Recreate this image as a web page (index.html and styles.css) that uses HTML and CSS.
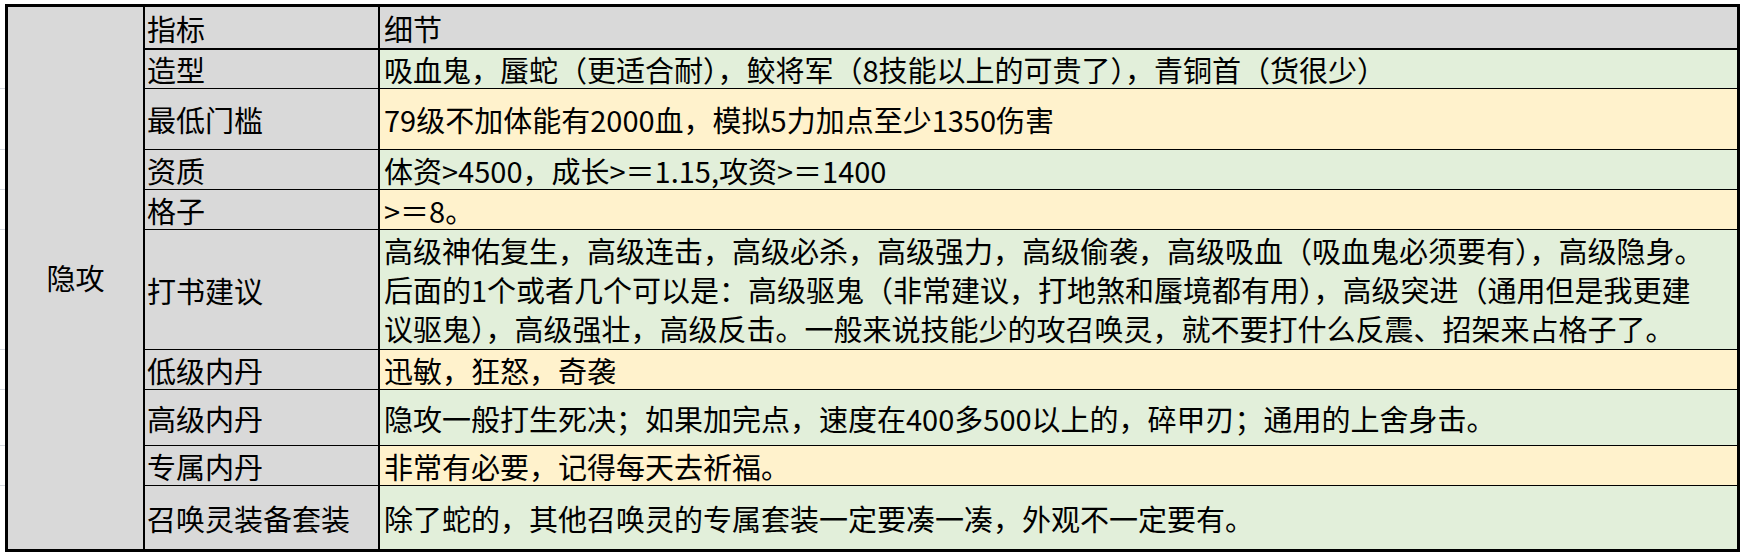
FILE: index.html
```html
<!DOCTYPE html>
<html lang="zh-CN">
<head>
<meta charset="utf-8">
<title>隐攻</title>
<link rel="stylesheet" href="styles.css">
</head>
<body>
<div class="page">
  <div class="gutter">
    <div class="g g1"></div>
    <div class="g g2"></div>
    <div class="g g3"></div>
    <div class="g g3"></div>
    <div class="g g4"></div>
    <div class="g g3"></div>
    <div class="g g5"></div>
    <div class="g g3"></div>
  </div>
  <div class="sheet">
    <div class="cell group">隐攻</div>

    <div class="cell key head">指标</div>
    <div class="cell val head">细节</div>

    <div class="cell key">造型</div>
    <div class="cell val green">吸血鬼，蜃蛇（更适合耐），鲛将军（8技能以上的可贵了），青铜首（货很少）</div>

    <div class="cell key">最低门槛</div>
    <div class="cell val yellow">79级不加体能有2000血，模拟5力加点至少1350伤害</div>

    <div class="cell key">资质</div>
    <div class="cell val green">体资&gt;4500，成长&gt;＝1.15,攻资&gt;＝1400</div>

    <div class="cell key">格子</div>
    <div class="cell val yellow">&gt;＝8。</div>

    <div class="cell key">打书建议</div>
    <div class="cell val green multi">高级神佑复生，高级连击，高级必杀，高级强力，高级偷袭，高级吸血（吸血鬼必须要有），高级隐身。<br>后面的1个或者几个可以是：高级驱鬼（非常建议，打地煞和蜃境都有用），高级突进（通用但是我更建<br>议驱鬼），高级强壮，高级反击。一般来说技能少的攻召唤灵，就不要打什么反震、招架来占格子了。</div>

    <div class="cell key">低级内丹</div>
    <div class="cell val yellow">迅敏，狂怒，奇袭</div>

    <div class="cell key">高级内丹</div>
    <div class="cell val green">隐攻一般打生死决；如果加完点，速度在400多500以上的，碎甲刃；通用的上舍身击。</div>

    <div class="cell key">专属内丹</div>
    <div class="cell val yellow">非常有必要，记得每天去祈福。</div>

    <div class="cell key last">召唤灵装备套装</div>
    <div class="cell val green last">除了蛇的，其他召唤灵的专属套装一定要凑一凑，外观不一定要有。</div>
  </div>
</div>
</body>
</html>
```

FILE: styles.css
```css
* {
  box-sizing: border-box;
}

html, body {
  margin: 0;
  padding: 0;
  background: #ffffff;
}

body {
  width: 1744px;
  height: 556px;
  overflow: hidden;
  font-family: "Noto Sans CJK SC", "Microsoft YaHei", sans-serif;
  color: #000;
}

.page {
  display: flex;
  align-items: flex-start;
}

.gutter {
  width: 5px;
  display: flex;
  flex-direction: column;
}

.g {
  border-bottom: 1px solid #d5d9e0;
}

.g1 { height: 89px; }
.g2 { height: 61px; }
.g3 { height: 40px; }
.g4 { height: 120px; }
.g5 { height: 56px; }

.sheet {
  margin-top: 4px;
  display: grid;
  grid-template-columns: 135px 233px 1357px;
  grid-template-rows: 43px 39px 61px 40px 40px 120px 40px 56px 40px 63px;
  column-gap: 2px;
  background: #000;
  border: 3px solid #000;
}

.cell {
  display: flex;
  align-items: center;
  font-size: 29px;
  line-height: 34px;
  white-space: nowrap;
  border-bottom: 1px solid #000;
}

.group {
  grid-column: 1;
  grid-row: 1 / -1;
  justify-content: center;
  background: #d9d9d9;
  border-bottom: none;
  padding-bottom: 2px;
}

.key {
  background: #d9d9d9;
  padding-left: 2px;
}

.val {
  padding-left: 4px;
}

.head {
  background: #d9d9d9;
  border-bottom-width: 2px;
}

.green {
  background: #e2efda;
}

.yellow {
  background: #fff2cc;
}

.multi {
  line-height: 39px;
}

.last {
  border-bottom: none;
}
```
